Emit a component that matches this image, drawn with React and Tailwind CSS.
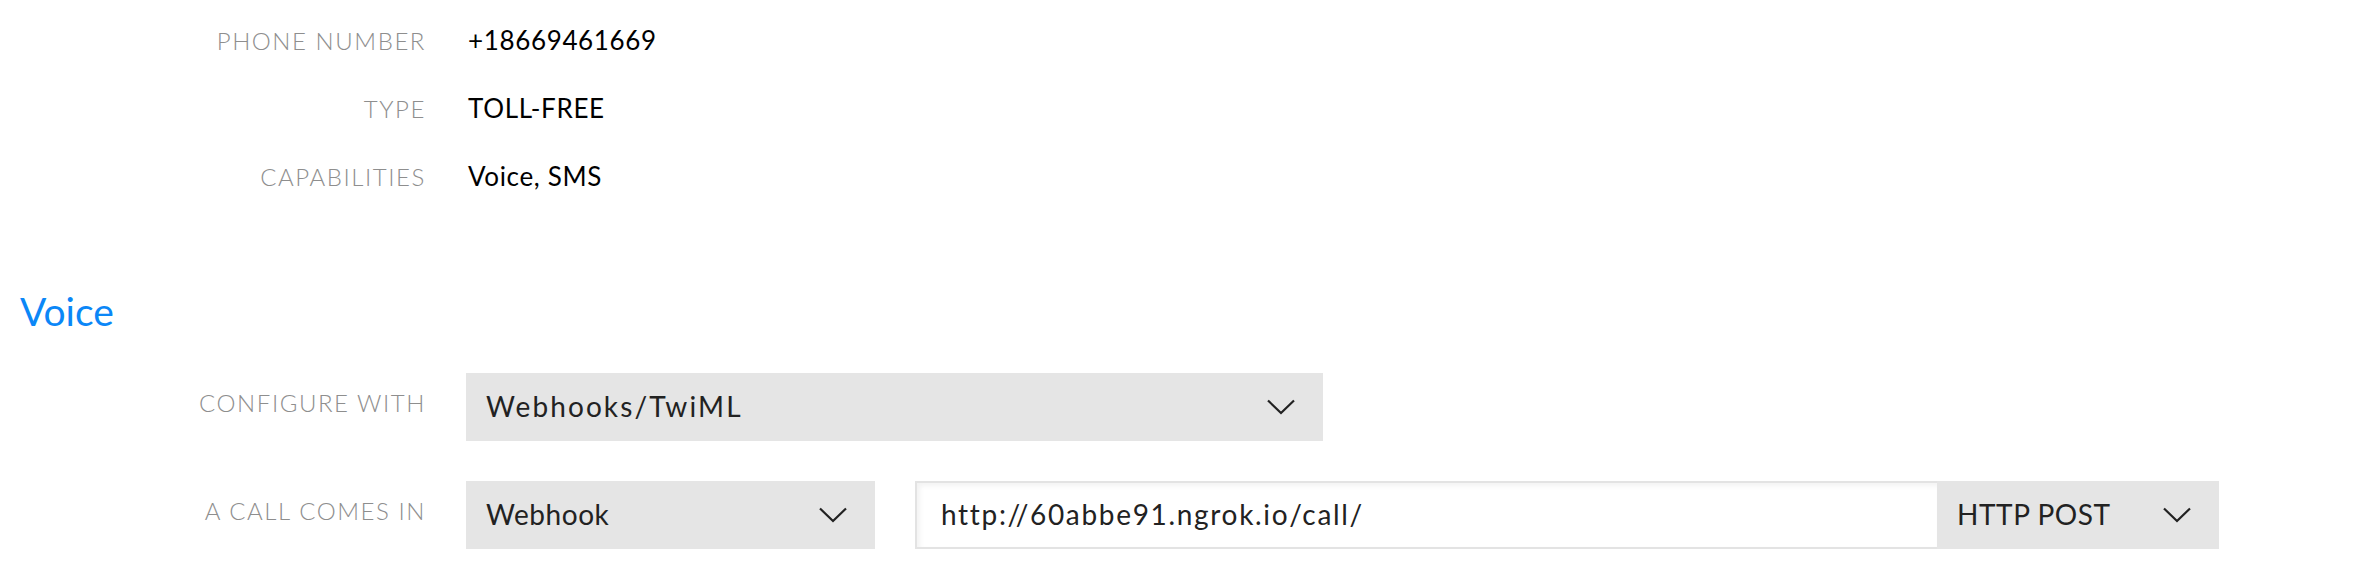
import React from "react";

function Chevron() {
  return (
    <svg width="28" height="16" viewBox="0 0 28 16" fill="none" className="shrink-0">
      <path d="M1 1.5 L14 14 L27 1.5" stroke="#222" strokeWidth="2.2" />
    </svg>
  );
}

function InfoRow({ label, value }) {
  return (
    <div className="grid grid-cols-[426px_1fr] gap-x-[42px] h-[68px] items-center">
      <div className="text-right text-[24px] font-light tracking-[0.065em] text-[#8e8e8e] leading-[1.2]">{label}</div>
      <div className="text-[26px] tracking-[0.025em] text-black leading-[1.2]">{value}</div>
    </div>
  );
}

function Select({ children, width, tracking = "tracking-[0.02em]" }) {
  return (
    <div className={`${width} h-[68px] bg-[#e5e5e5] flex items-center justify-between pl-[20px] pr-[28px]`}>
      <span className={`${tracking} text-[28px] text-[#222] leading-[1.2] whitespace-nowrap`}>{children}</span>
      <Chevron />
    </div>
  );
}

function FieldRow({ label, children }) {
  return (
    <div className="grid grid-cols-[426px_1fr] gap-x-[40px] items-center">
      <div className="text-right text-[24px] font-light tracking-[0.065em] text-[#8e8e8e] leading-[1.2] mb-[7px]">{label}</div>
      <div className="flex items-center">{children}</div>
    </div>
  );
}

export default function App() {
  return (
    <div className="w-[2368px] h-[570px] bg-white font-['Lato',sans-serif] overflow-hidden">
      <div className="pt-[7px]">
        <InfoRow label="PHONE NUMBER" value="+18669461669" />
        <InfoRow label="TYPE" value="TOLL-FREE" />
        <InfoRow label="CAPABILITIES" value="Voice, SMS" />
      </div>

      <h2 className="mt-[77px] pl-[20px] text-[39px] leading-[1.2] text-[#0b87f7]">Voice</h2>

      <div className="mt-[38px] flex flex-col gap-[40px]">
        <FieldRow label="CONFIGURE WITH">
          <Select width="w-[857px]" tracking="tracking-[0.075em]">Webhooks/TwiML</Select>
        </FieldRow>
        <FieldRow label="A CALL COMES IN">
          <Select width="w-[409px]">Webhook</Select>
          <div className="ml-[40px] flex h-[68px]">
            <div className="w-[1022px] h-full border-2 border-[#e3e3e3] border-r-0 bg-white pl-[24px] flex items-center text-[28px] tracking-[0.06em] leading-[1.2] text-[#222] shadow-[inset_3px_3px_5px_rgba(0,0,0,0.05)] whitespace-nowrap">
              http://60abbe91.ngrok.io/call/
            </div>
            <Select width="w-[282px]">HTTP POST</Select>
          </div>
        </FieldRow>
      </div>
    </div>
  );
}
